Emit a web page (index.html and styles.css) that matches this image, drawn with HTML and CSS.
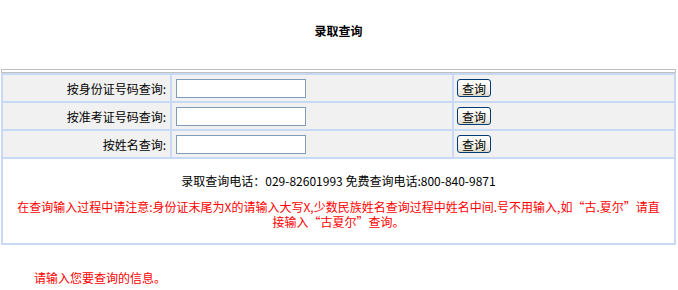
FILE: index.html
```html
<!DOCTYPE html>
<html lang="zh-CN">
<head>
<meta charset="UTF-8">
<title>录取查询</title>
<link rel="stylesheet" href="styles.css">
</head>
<body>
  <div class="page">
    <h2 class="title">录取查询</h2>
    <div class="rule"></div>

    <table class="query">
      <tr>
        <td class="label">按身份证号码查询:</td>
        <td class="field"><input type="text" class="box"></td>
        <td class="action"><button class="btn">查询</button></td>
      </tr>
      <tr>
        <td class="label">按准考证号码查询:</td>
        <td class="field"><input type="text" class="box"></td>
        <td class="action"><button class="btn">查询</button></td>
      </tr>
      <tr>
        <td class="label">按姓名查询:</td>
        <td class="field"><input type="text" class="box"></td>
        <td class="action"><button class="btn">查询</button></td>
      </tr>
      <tr>
        <td class="notes" colspan="3">
          <p class="phone">录取查询电话：029-82601993 免费查询电话:800-840-9871</p>
          <p class="warn">在查询输入过程中请注意:身份证末尾为X的请输入大写X,少数民族姓名查询过程中姓名中间.号不用输入,如“古.夏尔”请直接输入“古夏尔”查询。</p>
        </td>
      </tr>
    </table>

    <p class="hint">请输入您要查询的信息。</p>
  </div>
</body>
</html>
```

FILE: styles.css
```css
body {
  margin: 0;
  font-family: "Noto Sans CJK SC", "DejaVu Sans", sans-serif;
  font-size: 12px;
  line-height: 15px;
  color: #000;
  background: #fff;
}
.page {
  width: 675px;
  margin-left: 1px;
}
.title {
  margin: 0;
  padding: 23px 0 31px;
  font-size: 12px;
  line-height: 15px;
  font-weight: bold;
  text-align: center;
}
.rule {
  height: 2px;
  border: 1px solid #c0c0c0;
}
.query {
  width: 675px;
  border-collapse: separate;
  border-spacing: 2px;
  background: #c7d9f5;
  table-layout: fixed;
}
.query td {
  height: 26px;
  padding: 0;
  background: #f1f1f1;
}
.label {
  width: 163px;
  padding-right: 4px !important;
  text-align: right;
}
.field {
  width: 280px;
}
.action {
  width: 220px;
}
.box {
  display: block;
  width: 130px;
  height: 19px;
  margin-left: 4px;
  padding: 0 2px;
  box-sizing: border-box;
  border: 1px solid #7f9db9;
  background: #fff;
}
.btn {
  display: block;
  width: 34px;
  height: 18px;
  margin-left: 3px;
  padding: 0;
  border: 1px solid #003c74;
  border-radius: 3px;
  background: linear-gradient(#ffffff, #f1efe6 70%, #dcd8c8);
  font-family: inherit;
  font-size: 12px;
  line-height: 15px;
  color: #000;
}
.query td.notes {
  height: auto;
  padding: 14px 11px;
  background: #fff;
  text-align: center;
}
.phone {
  margin: 0 0 11px;
}
.warn {
  margin: 0;
  color: #f00;
}
.hint {
  margin: 25px 0 0;
  padding-left: 33px;
  color: #f00;
}
```
